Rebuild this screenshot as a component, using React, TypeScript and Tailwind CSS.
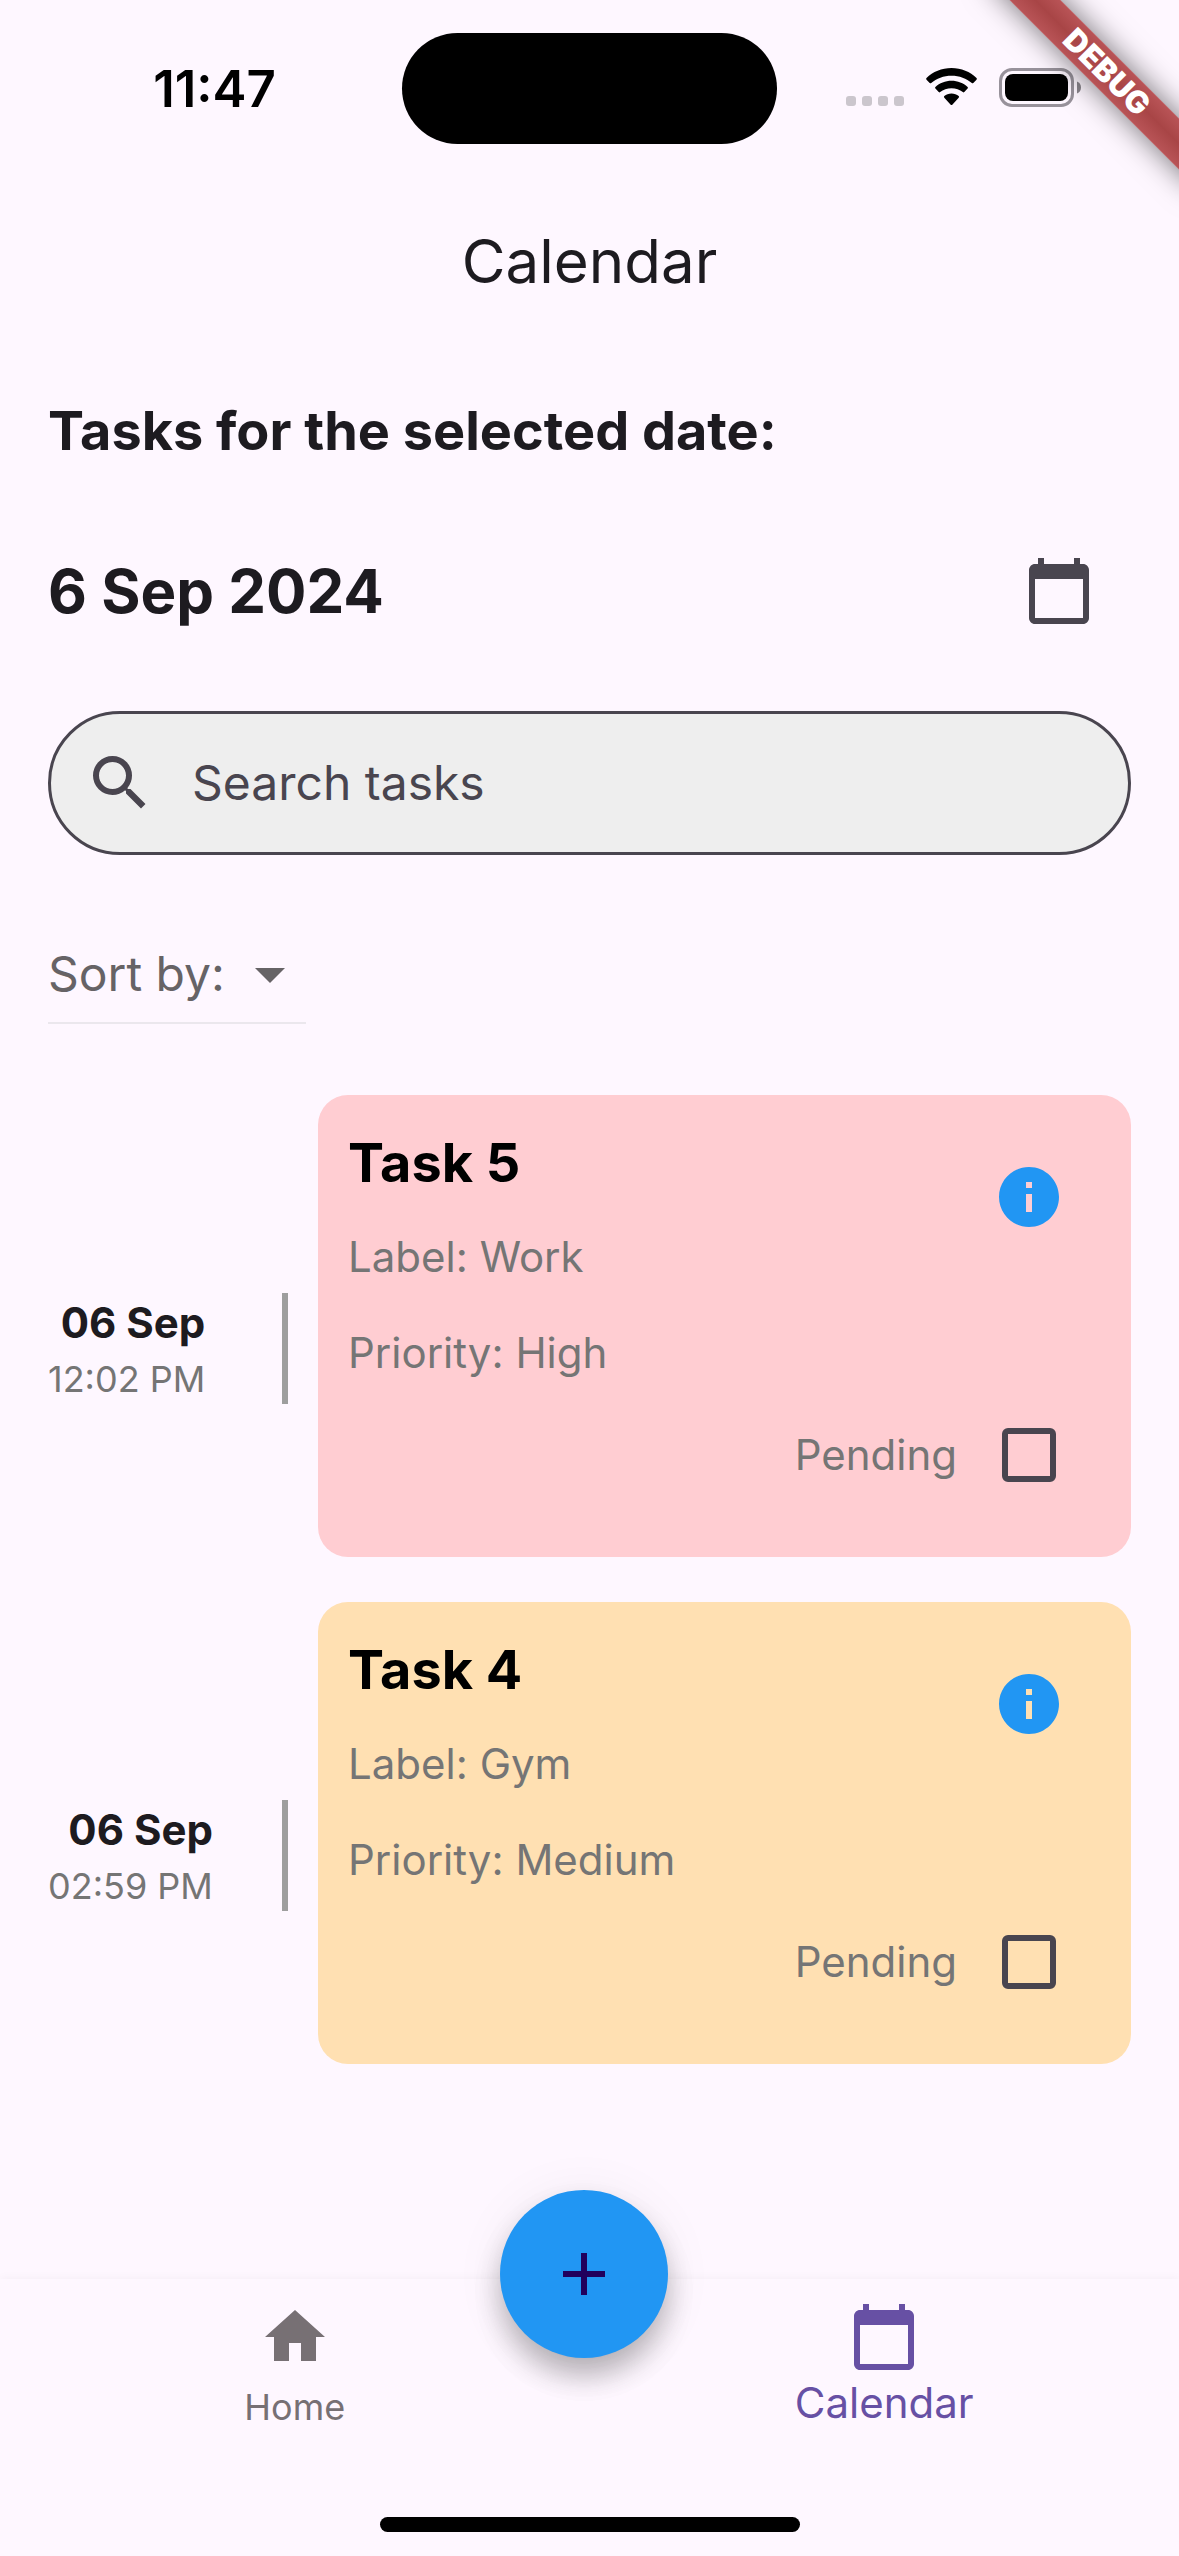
import {
  MdAdd,
  MdArrowDropDown,
  MdCalendarToday,
  MdHome,
  MdInfo,
  MdSearch,
} from "react-icons/md";

type Task = {
  id: string;
  title: string;
  label: string;
  priority: string;
  date: string;
  time: string;
  card: string;
};

const tasks: Task[] = [
  {
    id: "task-5",
    title: "Task 5",
    label: "Work",
    priority: "High",
    date: "06 Sep",
    time: "12:02 PM",
    card: "bg-[#ffcdd2]",
  },
  {
    id: "task-4",
    title: "Task 4",
    label: "Gym",
    priority: "Medium",
    date: "06 Sep",
    time: "02:59 PM",
    card: "bg-[#ffe0b2]",
  },
];

function WifiIcon() {
  return (
    <svg viewBox="0 0 51 38" className="h-[38px] w-[51px]" aria-hidden="true">
      <path d="M25.5 0C35.3 0 44.200 3.700 50.500 10.100c.5.5.5 1.100 0 1.600l-3.200 3.300c-.4.4-1 .4-1.500 0C40.500 10.300 33.300 7.700 25.500 7.700S10.500 10.300 5.200 15c-.5.400-1.100.4-1.500 0L.5 11.700c-.5-.5-.5-1.100 0-1.600C6.800 3.700 15.700 0 25.500 0z" />
      <path d="M25.500 12.800c6.200 0 11.900 2.300 16.100 6.200.5.500.5 1.100 0 1.600l-3.300 3.500c-.4.400-1 .4-1.500 0-3-2.500-7-3.900-11.300-3.900s-8.300 1.400-11.300 3.900c-.5.4-1.100.4-1.500 0l-3.300-3.500c-.5-.5-.5-1.100 0-1.600 4.200-3.900 9.900-6.200 16.100-6.200z" />
      <path d="M25.500 25.500c2.800 0 5.300.9 7.200 2.600.5.500.5 1.100 0 1.600l-6.400 7c-.5.500-1.100.5-1.600 0l-6.400-7c-.5-.5-.5-1.100 0-1.600 1.900-1.700 4.400-2.600 7.200-2.600z" />
    </svg>
  );
}

function BatteryIcon() {
  return (
    <svg viewBox="0 0 83 39" className="h-[39px] w-[83px]" aria-hidden="true">
      <rect x="1.500" y="1.500" width="72" height="36" rx="11.500" fill="none" stroke="#98929b" strokeWidth="3" />
      <rect x="6" y="6" width="63" height="27" rx="8" />
      <path d="M78 13.500c2.600 1 4 3.300 4 6s-1.400 5-4 6z" fill="#89848b" />
    </svg>
  );
}

function StatusBar() {
  return (
    <header className="grid h-[177px] grid-cols-3 text-black">
      <div className="flex items-center justify-center pl-9 text-[51px] leading-[60px] font-semibold">
        <span>11:47</span>
      </div>
      <div className="flex justify-center pt-[33px]">
        <div className="h-[111px] w-[375px] shrink-0 rounded-full bg-black" />
      </div>
      <div className="flex items-start justify-end gap-[22px] pr-[97px] pt-[68px]">
        <div className="flex gap-1.5 pt-7">
          {[0, 1, 2, 3].map((dot) => (
            <span key={dot} className="size-[10px] rounded-[3px] bg-[#cbc6cd]" />
          ))}
        </div>
        <WifiIcon />
        <BatteryIcon />
      </div>
    </header>
  );
}

function DebugBanner() {
  return (
    <div className="pointer-events-none absolute top-0 right-0 size-[240px] overflow-hidden">
      <div className="absolute top-[54px] right-[-78px] flex h-9 w-[300px] rotate-45 items-center justify-center bg-linear-to-b from-[#b95457] via-[#a84546] to-[#b95457] text-[31px] leading-9 font-black text-white shadow-[0_0_30px_rgba(0,0,0,0.55)]">
        DEBUG
      </div>
    </div>
  );
}

function TaskRow({ task }: { task: Task }) {
  return (
    <li className="flex items-center">
      <div className="flex w-[234px] shrink-0">
        <div className="text-right">
          <p className="text-[42px] leading-[60px] font-bold text-[#1d1b20]">{task.date}</p>
          <p className="text-[36px] leading-[52px] text-[#757575]">{task.time}</p>
        </div>
      </div>
      <div className="mr-[30px] h-[111px] w-1.5 shrink-0 bg-[#9e9e9e]" />
      <article className={`mb-[45px] flex-1 rounded-[30px] p-[30px] ${task.card}`}>
        <div className="flex items-start justify-between">
          <div className="text-[42px] leading-[60px] text-[#757575]">
            <h2 className="mb-[26px] text-[54px] leading-[76px] font-bold text-black">{task.title}</h2>
            <p className="mb-9">Label: {task.label}</p>
            <p>Priority: {task.priority}</p>
          </div>
          <button
            type="button"
            aria-label={`Details of ${task.title}`}
            className="flex size-36 items-center justify-center text-[#2196f3]"
          >
            <MdInfo className="size-[72px]" />
          </button>
        </div>
        <label className="flex h-36 items-center justify-end text-[42px] leading-[60px] text-[#757575]">
          Pending
          <span className="flex size-36 items-center justify-center">
            <input
              type="checkbox"
              className="size-[54px] appearance-none rounded-[6px] border-6 border-[#49454f] checked:bg-[#6750a4]"
            />
          </span>
        </label>
      </article>
    </li>
  );
}

function BottomNav() {
  return (
    <nav className="relative mt-auto flex h-[277px] flex-col justify-between bg-[#fef7ff] pt-[22px] pb-6 shadow-[0_-2px_8px_rgba(0,0,0,0.03)]">
      <div className="grid grid-cols-2">
        <a href="#home" className="flex flex-col items-center text-[36px] leading-[68px] text-[#777074]">
          <MdHome className="size-[72px]" />
          Home
        </a>
        <a
          href="#calendar"
          aria-current="page"
          className="flex flex-col items-center text-[42px] leading-[60px] text-[#6750a4]"
        >
          <MdCalendarToday className="size-[72px]" />
          Calendar
        </a>
      </div>
      <button
        type="button"
        aria-label="Add task"
        className="absolute -top-[89px] left-1/2 -ml-[90px] flex size-[168px] items-center justify-center rounded-full bg-[#2196f3] text-[#21005d] shadow-[0_18px_30px_-3px_rgba(0,0,0,0.2),0_18px_30px_rgba(0,0,0,0.1),0_3px_54px_rgba(0,0,0,0.06)]"
      >
        <MdAdd className="size-[72px]" />
      </button>
      <div className="h-[15px] w-[420px] self-center rounded-full bg-black" />
    </nav>
  );
}

export default function App() {
  return (
    <div className="relative flex min-h-screen flex-col overflow-hidden bg-[#fef7ff] font-['Inter',sans-serif] text-[#1d1b20]">
      <StatusBar />
      <h1 className="text-center text-[60px] leading-[168px]">Calendar</h1>
      <main className="flex flex-col px-12 pt-12 pb-9">
        <p className="mb-[50px] text-[54px] leading-[76px] font-bold">Tasks for the selected date:</p>
        <div className="mb-12 flex h-36 items-center justify-between">
          <p className="text-[60px] leading-[84px] font-bold">6 Sep 2024</p>
          <button
            type="button"
            aria-label="Pick a date"
            className="flex size-36 items-center justify-center text-[#49454f]"
          >
            <MdCalendarToday className="size-[72px]" />
          </button>
        </div>
        <label className="mb-12 flex h-36 items-center gap-9 rounded-full border-3 border-[#49454f] bg-[#eeeeee] px-[33px] text-[#49454f]">
          <MdSearch className="size-[72px] shrink-0" />
          <input
            type="text"
            aria-label="Search tasks"
            placeholder="Search tasks"
            className="min-w-0 flex-1 bg-transparent text-[48px] leading-[68px] outline-none placeholder:text-[#49454f]"
          />
        </label>
        <div className="mb-12 flex h-36 items-center">
          <div className="relative flex h-[98px] w-[258px] items-center border-b-2 border-[#ebe7ed] text-[#666366]">
            <select
              aria-label="Sort by"
              defaultValue=""
              className="h-full w-full appearance-none bg-transparent text-[48px] leading-[68px] outline-none"
            >
              <option value="">Sort by:</option>
              <option value="date">Date</option>
              <option value="priority">Priority</option>
            </select>
            <MdArrowDropDown className="pointer-events-none absolute right-0 size-[72px]" />
          </div>
        </div>
        <ul className="flex flex-col">
          {tasks.map((task) => (
            <TaskRow key={task.id} task={task} />
          ))}
        </ul>
      </main>
      <BottomNav />
      <DebugBanner />
    </div>
  );
}
